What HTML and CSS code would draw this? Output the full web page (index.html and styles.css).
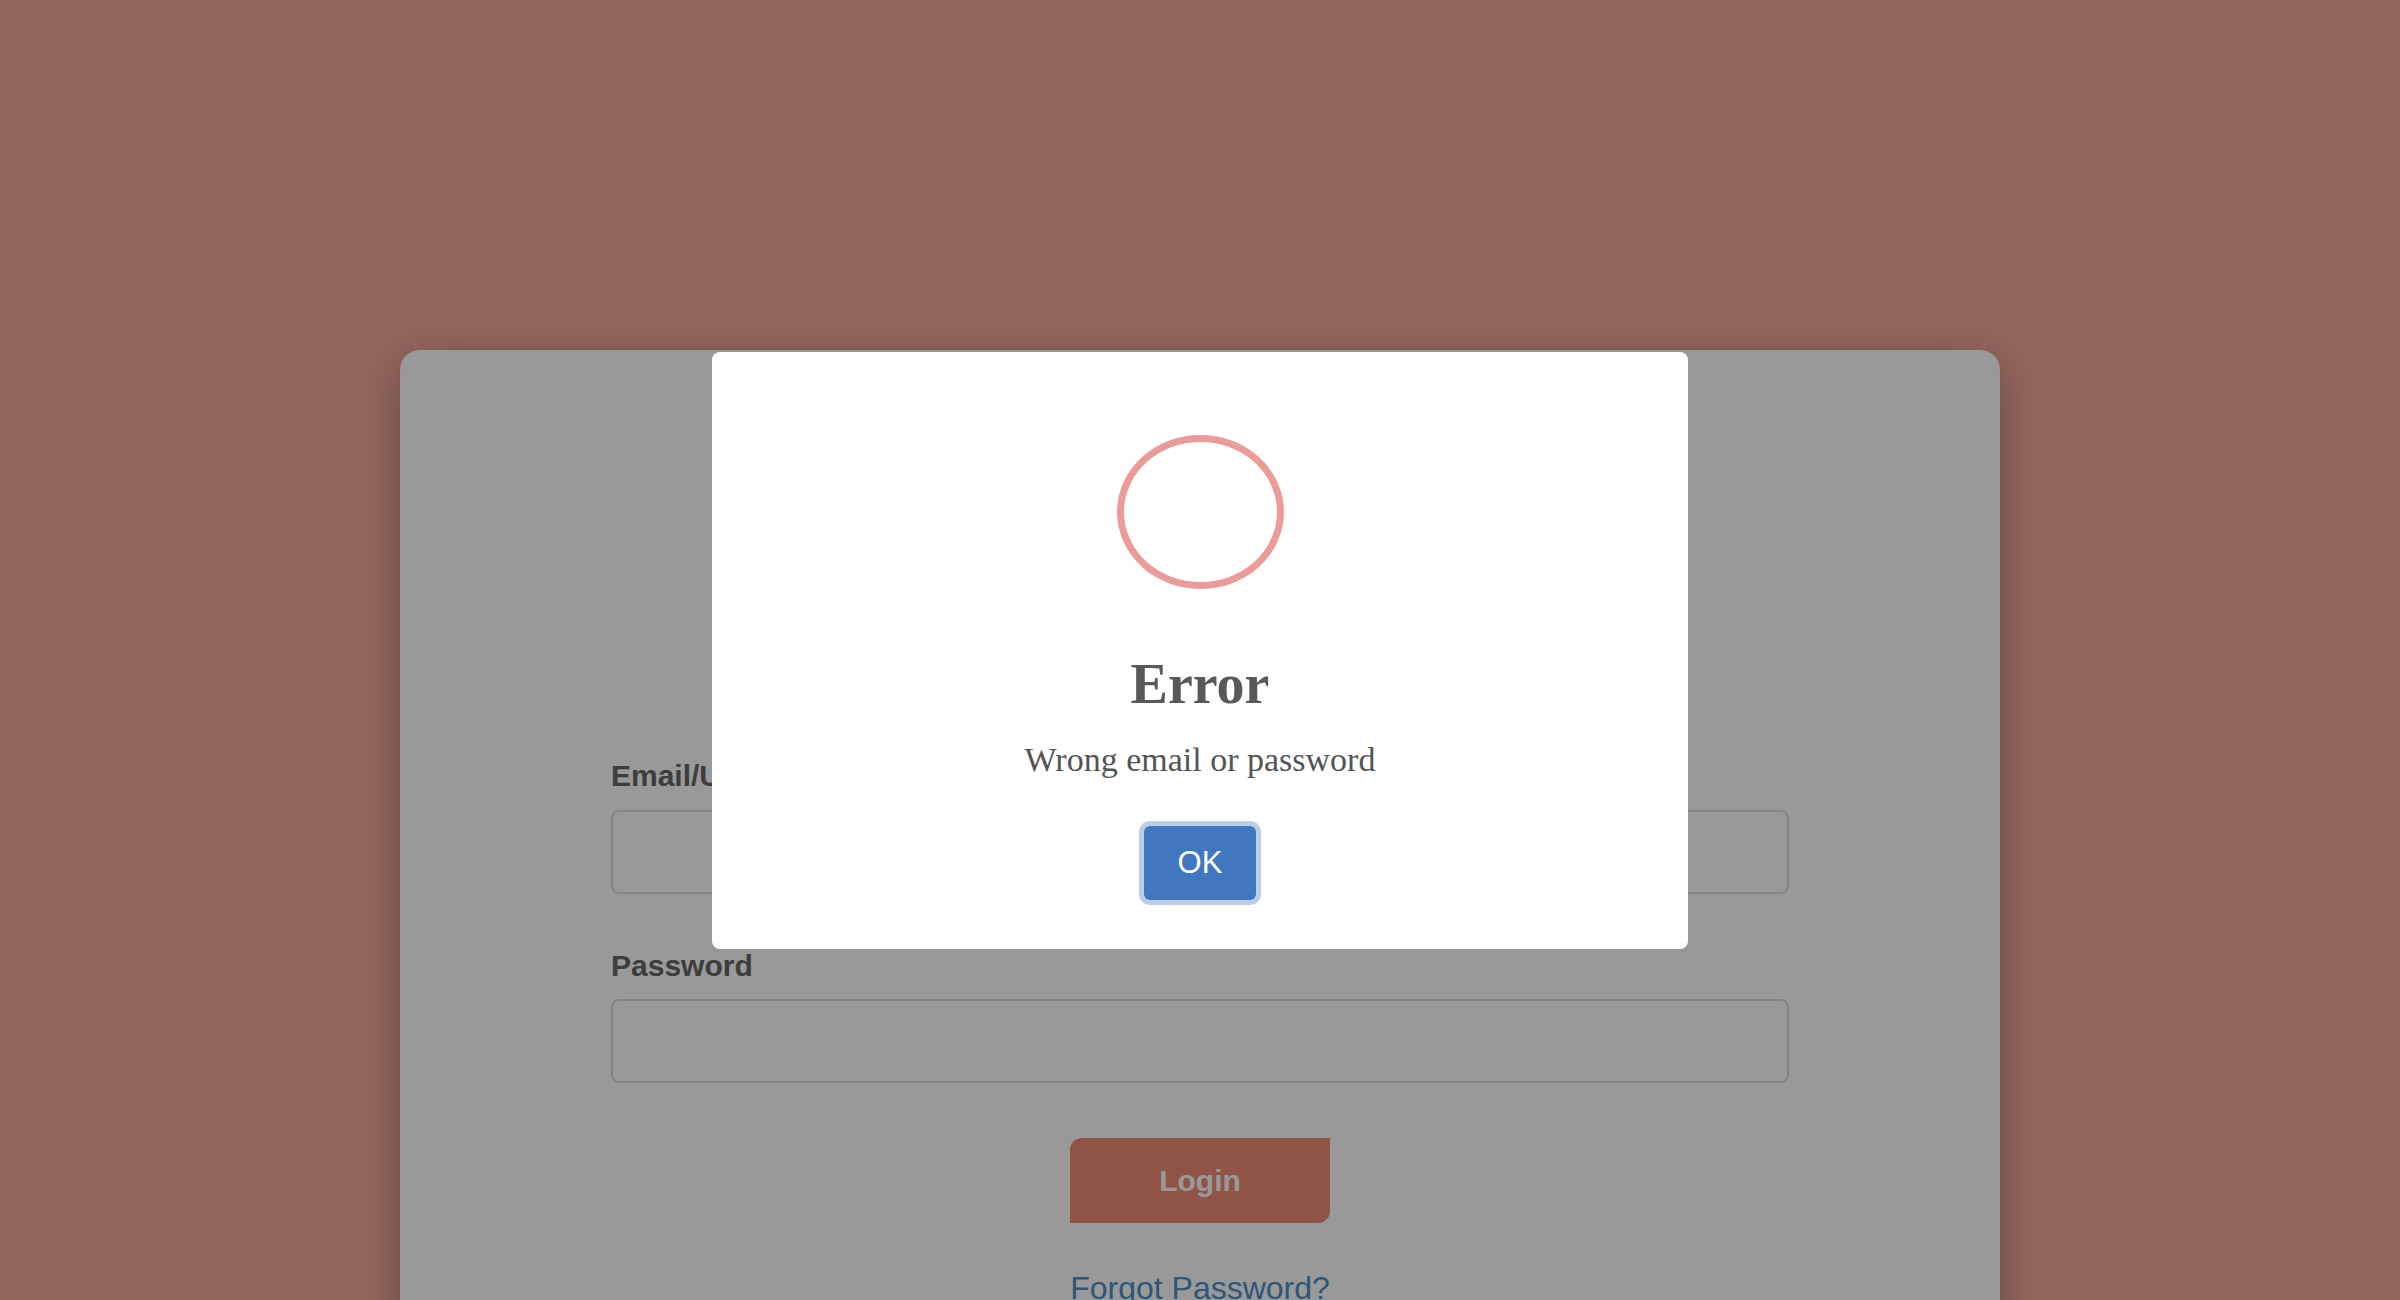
FILE: index.html
```html
<!DOCTYPE html>
<html lang="en">
<head>
<meta charset="utf-8">
<title>Login</title>
<link rel="stylesheet" href="styles.css">
</head>
<body>
  <main class="page">
    <section class="card">
      <header class="card-header">
        <h1 class="card-title">Login</h1>
      </header>
      <form class="form">
        <div class="field">
          <label class="label" for="user">Email/Username</label>
          <input class="input" id="user" type="text">
        </div>
        <div class="field">
          <label class="label" for="pass">Password</label>
          <input class="input" id="pass" type="password">
        </div>
        <div class="actions">
          <button class="login-btn" type="button">Login</button>
          <a class="forgot" href="#">Forgot Password?</a>
        </div>
      </form>
    </section>
  </main>

  <div class="overlay">
    <div class="modal" role="dialog">
      <div class="error-icon"></div>
      <h2 class="modal-title">Error</h2>
      <p class="modal-text">Wrong email or password</p>
      <button class="ok-btn" type="button">OK</button>
    </div>
  </div>
</body>
</html>
```
FILE: styles.css
```css
html, body {
  margin: 0;
  padding: 0;
  height: 100%;
  overflow: hidden;
}

body {
  background: #f5aa9b;
  font-family: "Liberation Sans", Arial, sans-serif;
}

.page {
  display: flex;
  justify-content: center;
  padding-top: 350px;
}

.card {
  width: 1600px;
  min-height: 1100px;
  background: #ffffff;
  border-radius: 20px;
  box-shadow: 0 10px 45px rgba(0, 0, 0, 0.28);
  box-sizing: border-box;
}

.card-header {
  height: 409px;
  display: flex;
  align-items: center;
  justify-content: center;
}

.card-title {
  margin: 0;
  font-size: 56px;
  color: #444;
}

.form {
  width: 1178px;
  margin: 0 auto;
  display: flex;
  flex-direction: column;
}

.field {
  display: flex;
  flex-direction: column;
  margin-bottom: 55px;
}

.label {
  font-size: 30px;
  font-weight: bold;
  color: #666;
  line-height: 34.5px;
  margin-bottom: 16px;
}

.input {
  height: 84px;
  box-sizing: border-box;
  border: 2px solid #dcdcdc;
  border-radius: 8px;
  background: #fff;
  font-size: 30px;
  padding: 0 20px;
}

.actions {
  display: flex;
  flex-direction: column;
  align-items: center;
}

.login-btn {
  width: 260px;
  height: 85px;
  border: none;
  border-radius: 12px 0 12px 0;
  background: #ee8c75;
  color: #fff;
  font-family: "Liberation Sans", Arial, sans-serif;
  font-size: 30px;
  font-weight: bold;
  margin-bottom: 47px;
  padding: 0;
}

.forgot {
  font-size: 32px;
  line-height: 37px;
  color: rgb(77, 143, 200);
  text-decoration: none;
}

.overlay {
  position: fixed;
  inset: 0;
  background: rgba(0, 0, 0, 0.4);
  display: flex;
  align-items: center;
  justify-content: center;
}

.modal {
  width: 976px;
  box-sizing: border-box;
  background: #fff;
  border-radius: 8px;
  padding: 83px 0 49px;
  display: flex;
  flex-direction: column;
  align-items: center;
  font-family: "Liberation Serif", "Times New Roman", serif;
}

.error-icon {
  width: 167px;
  height: 154px;
  box-sizing: border-box;
  border: 7px solid #eb9c98;
  border-radius: 50%;
  margin-bottom: 62px;
}

.modal-title {
  margin: 0 0 21px;
  font-size: 56px;
  line-height: 67px;
  font-weight: bold;
  color: #595959;
}

.modal-text {
  margin: 0 0 46px;
  font-size: 34px;
  line-height: 41px;
  color: #545454;
}

.ok-btn {
  border: none;
  border-radius: 6px;
  background: #4176c0;
  color: #fff;
  font-family: "Liberation Sans", Arial, sans-serif;
  font-size: 31px;
  line-height: 36px;
  padding: 19px 34px;
  box-shadow: 0 0 0 5px #bccde7;
}
```
